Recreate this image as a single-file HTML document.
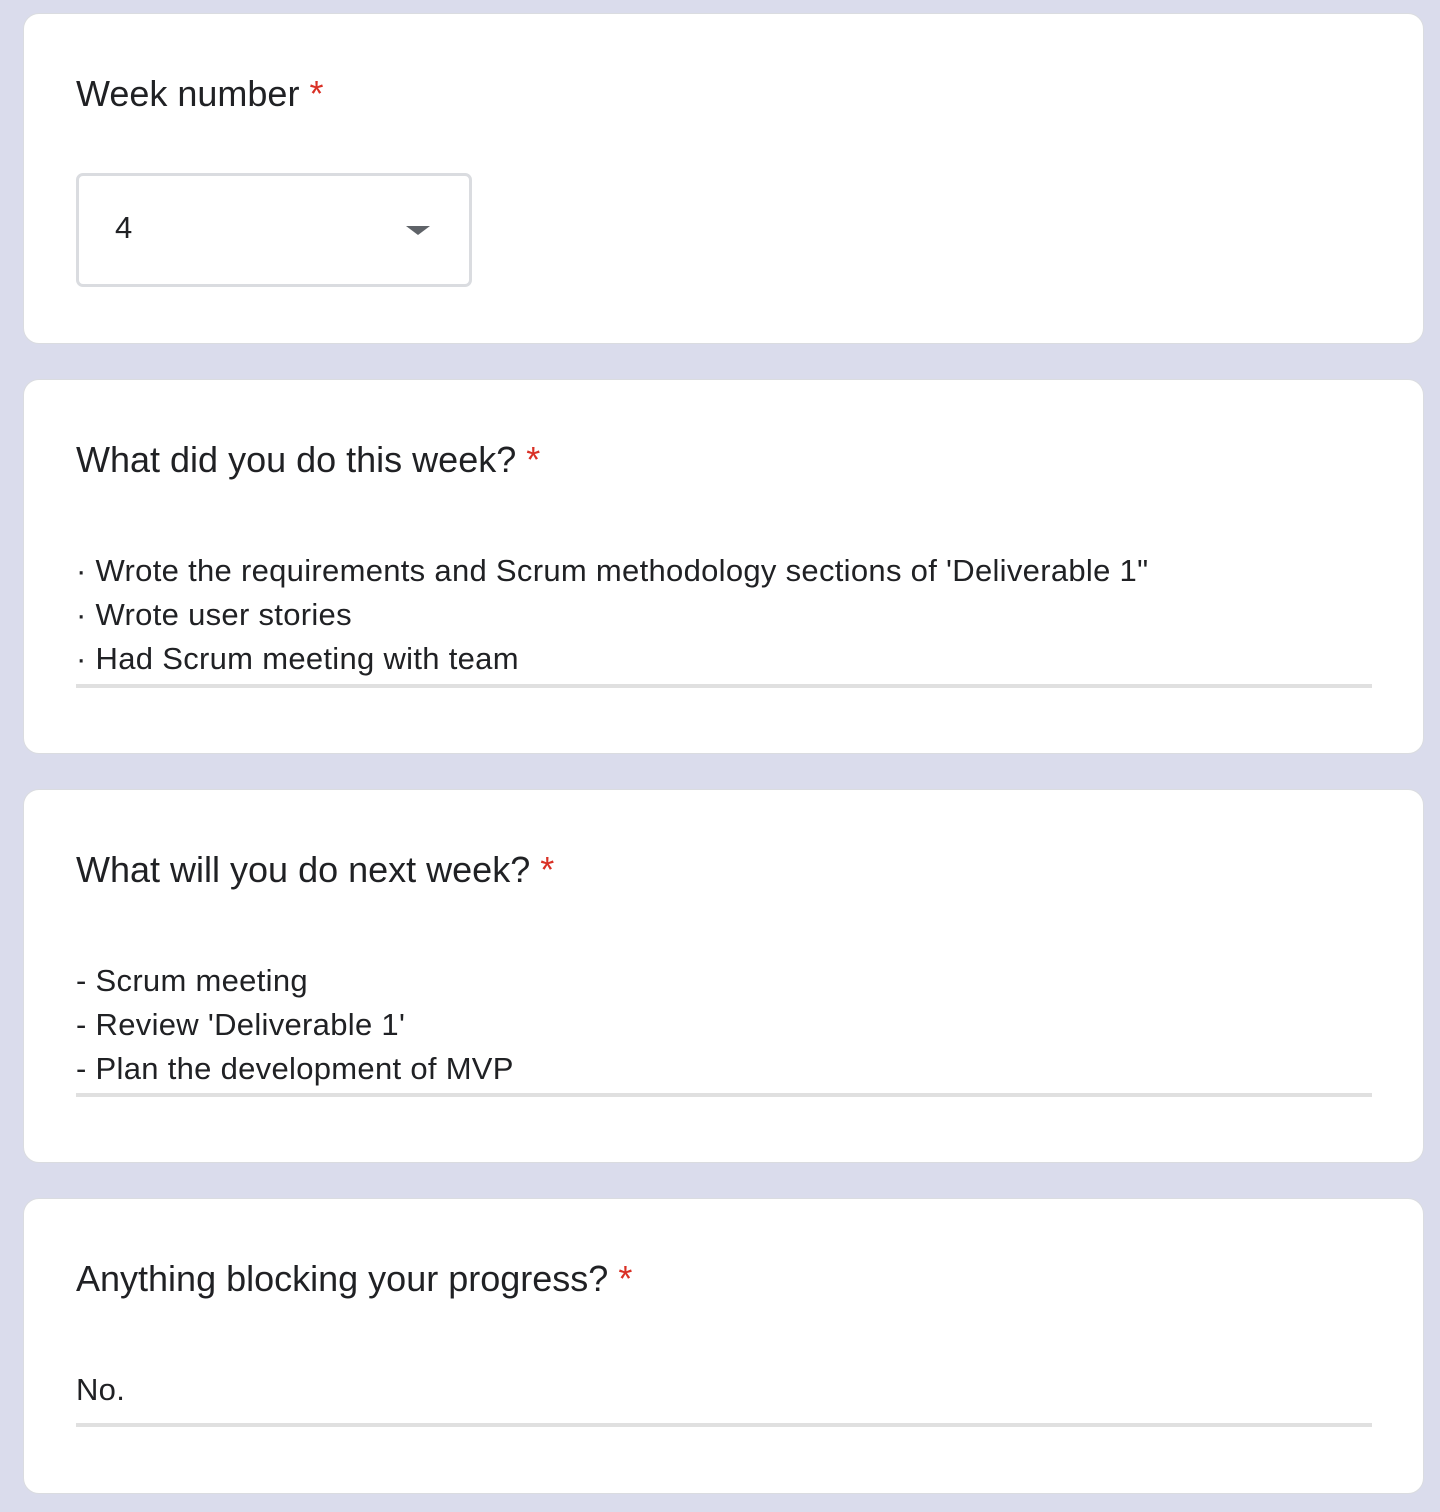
<!DOCTYPE html>
<html><head><style>
body{margin:0;width:1440px;height:1512px;background:#dadcec;font-family:"Liberation Sans",Arial,sans-serif;color:#202124;position:relative;overflow:hidden}
.card{position:absolute;left:23px;width:1401px;background:#fff;border:1px solid #dadce0;border-radius:16px;box-sizing:border-box}
.t{position:absolute;left:52px;font-size:36px;white-space:nowrap;letter-spacing:0}
.t b{color:#d93025;font-weight:normal;margin-left:10px}
.a{position:absolute;left:52px;font-size:31px;line-height:44px;white-space:nowrap;letter-spacing:0.3px}
.u{position:absolute;left:52px;width:1296px;height:4px;background:#e0e0e0}
.sel{position:absolute;left:52px;top:159px;width:396px;height:114px;border:3px solid #dadce0;border-radius:7px;box-sizing:border-box}
</style></head><body>
<div class="card" style="top:13px;height:331px">
<div class="t" style="top:59px">Week number<b>*</b></div>
<div class="sel"><span style="position:absolute;left:36px;top:34px;font-size:31px">4</span>
<div style="position:absolute;left:327px;top:50px;width:0;height:0;border-left:12px solid transparent;border-right:12px solid transparent;border-top:9px solid #5f6368"></div></div>
</div>
<div class="card" style="top:379px;height:375px">
<div class="t" style="top:59px">What did you do this week?<b>*</b></div>
<div class="a" style="top:169px">· Wrote the requirements and Scrum methodology sections of 'Deliverable 1"<br>· Wrote user stories<br>· Had Scrum meeting with team</div>
<div class="u" style="top:304px"></div>
</div>
<div class="card" style="top:789px;height:374px">
<div class="t" style="top:59px">What will you do next week?<b>*</b></div>
<div class="a" style="top:169px">- Scrum meeting<br>- Review 'Deliverable 1'<br>- Plan the development of MVP</div>
<div class="u" style="top:303px"></div>
</div>
<div class="card" style="top:1198px;height:296px">
<div class="t" style="top:59px">Anything blocking your progress?<b>*</b></div>
<div class="a" style="top:169px">No.</div>
<div class="u" style="top:224px"></div>
</div>
</body></html>
